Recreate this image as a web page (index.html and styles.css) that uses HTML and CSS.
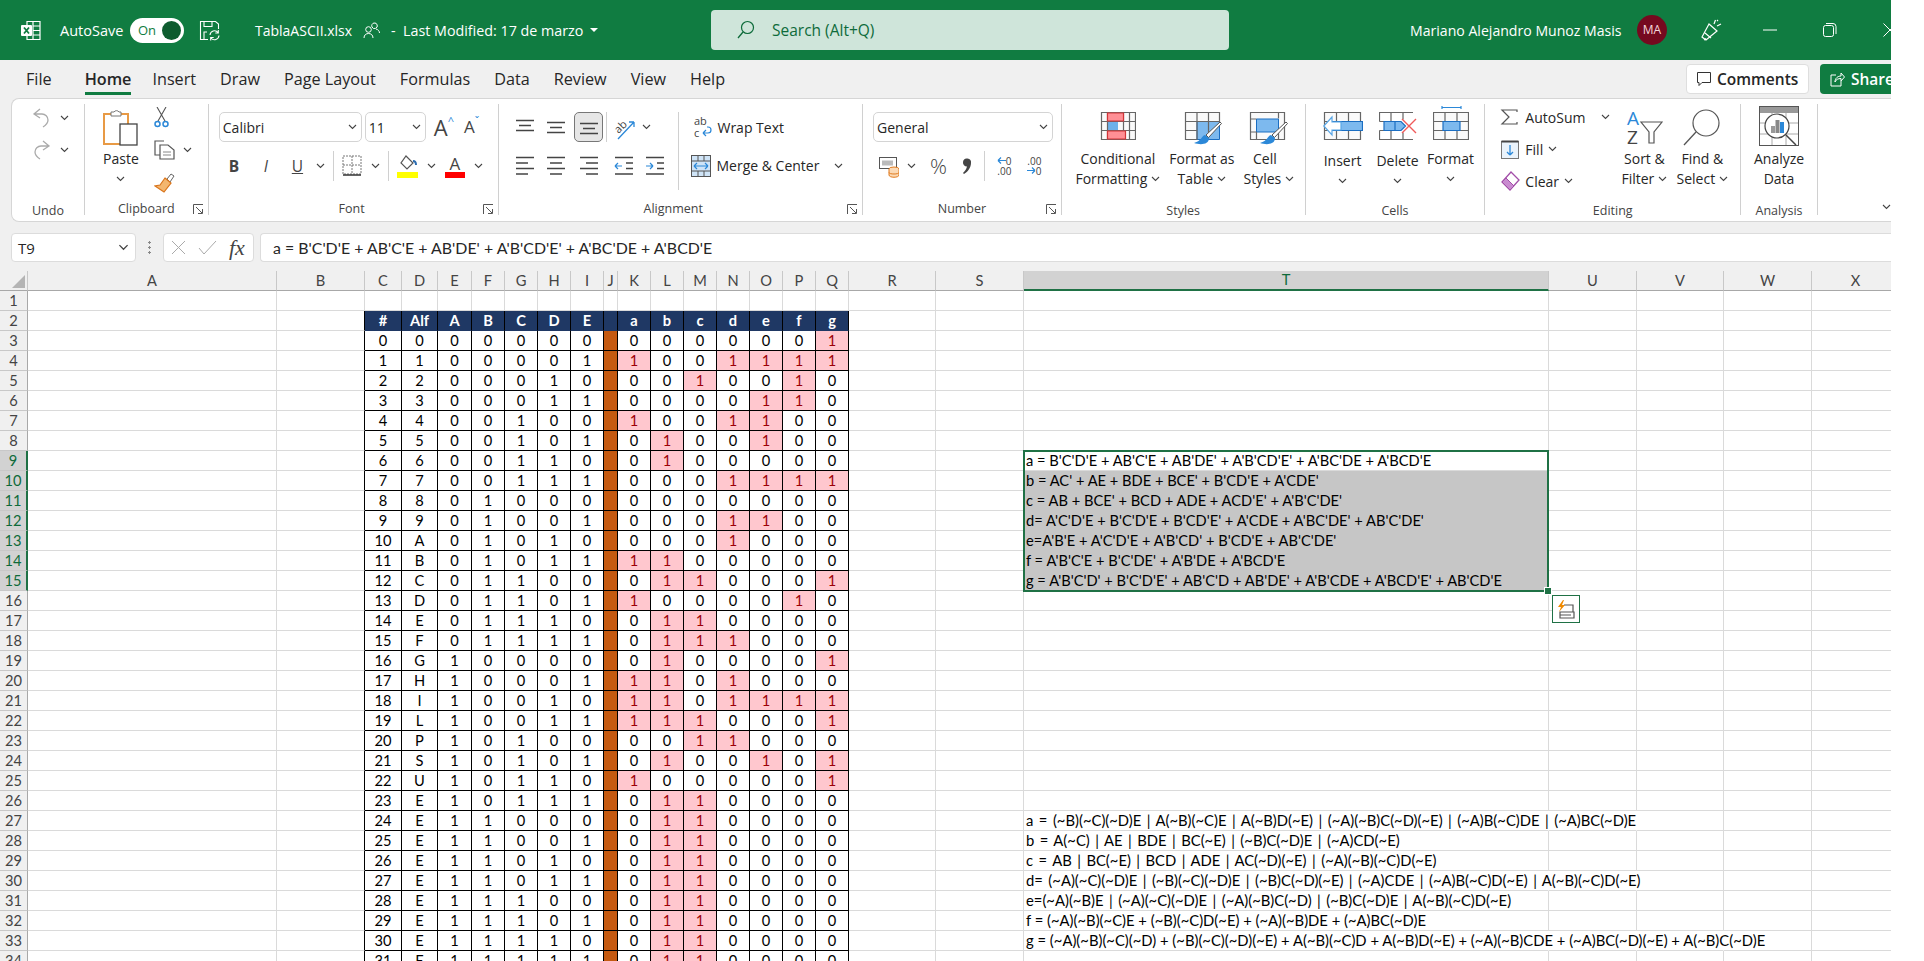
FILE: index.html
```html
<!DOCTYPE html>
<html lang="en">
<head>
    <meta charset="UTF-8">
    <title>TablaASCII.xlsx - Excel</title>
    <link rel="stylesheet" href="styles.css">
</head>
<body>

<svg class="defs" width="0" height="0">
    <symbol id="chev" viewBox="0 0 9 6"><path d="M1 1l3.500 3.500L8 1" fill="none" stroke="#444" stroke-width="1.100"/></symbol>
    <symbol id="launch" viewBox="0 0 11 11"><path d="M.5 10V.5H10M3 3l6 6M5 9.500h4.500V5" fill="none" stroke="#555"/></symbol>
</svg>

<div class="window">

    <div class="titlebar">
        <svg class="t-excel" width="21" height="21" viewBox="0 0 21 21">
            <path d="M7 1.500h13v18H7z" fill="none" stroke="#fff" stroke-width="1.200"/>
            <path d="M13 1.500v18M13 6h7M13 10.500h7M13 15h7" stroke="#fff" stroke-width="1.200"/>
            <rect x="1" y="5" width="11" height="11" rx="1" fill="#fff"/>
            <path d="M4 7.500l5 6M9 7.500l-5 6" stroke="#107c41" stroke-width="1.800"/>
        </svg>
        <span class="t-autosave">AutoSave</span>
        <div class="toggle"><span>On</span><i></i></div>
        <svg class="t-save" width="21" height="21" viewBox="0 0 21 21">
            <path d="M9 19.500H1.500v-18h15L19.500 4v5M5 1.500v5h8v-5M5 19v-7h3" fill="none" stroke="#fff" stroke-width="1.100"/>
            <path d="M11 15a4.500 4.500 0 0 1 8-2.500M20 15.500a4.500 4.500 0 0 1-8 2.500M19.300 10v3h-3M11.700 20.500v-3h3" fill="none" stroke="#fff" stroke-width="1.100"/>
        </svg>
        <span class="t-file">TablaASCII.xlsx</span>
        <svg class="t-person" width="17" height="17" viewBox="0 0 17 17">
            <circle cx="5.500" cy="7.500" r="2.800" fill="none" stroke="#fff"/>
            <path d="M1 16c0-3 2-4.500 4.500-4.500S10 13 10 16M9 5a2.800 2.800 0 1 0 2-4 2.800 2.800 0 0 0-2 4zM13 7c2 .5 3.500 2 3.500 4" fill="none" stroke="#fff"/>
        </svg>
        <span class="t-mod">-&nbsp; Last Modified: 17 de marzo</span>
        <i class="t-caret"></i>
        <div class="search">
            <svg width="18" height="20" viewBox="0 0 18 20">
                <circle cx="10.500" cy="7.500" r="6" fill="none" stroke="#0e6b3a" stroke-width="1.200"/>
                <path d="M6 12l-5 6" stroke="#0e6b3a" stroke-width="1.300"/>
            </svg>
            <span>Search (Alt+Q)</span>
        </div>
        <span class="t-user">Mariano Alejandro Munoz Masis</span>
        <div class="avatar">MA</div>
        <svg class="t-pen" width="22" height="24" viewBox="0 0 22 24">
            <path d="M9 6L2 19l4 3 11-9zM5 15l6 5M6 20.500l-2 1.500" fill="none" stroke="#fff" stroke-width="1.200"/>
            <path d="M14 6l1.500-4M17 8l4-2M17 3l1-1" stroke="#fff" stroke-width="1.200"/>
        </svg>
        <svg class="t-min" width="14" height="2" viewBox="0 0 14 2"><path d="M0 1h14" stroke="#fff"/></svg>
        <svg class="t-max" width="14" height="14" viewBox="0 0 14 14">
            <rect x=".5" y="2.500" width="10" height="11" rx="2" fill="none" stroke="#fff"/>
            <path d="M3 .5h7a3 3 0 0 1 3 3V11" fill="none" stroke="#fff"/>
        </svg>
        <svg class="t-close" width="14" height="14" viewBox="0 0 14 14"><path d="M.5.5l13 13M13.500.5l-13 13" stroke="#fff"/></svg>
    </div>

    <div class="tabsrow">
        <span class="tab t1">File</span>
        <span class="tab t2 active">Home</span>
        <span class="tab t3">Insert</span>
        <span class="tab t3">Draw</span>
        <span class="tab t3">Page Layout</span>
        <span class="tab t3">Formulas</span>
        <span class="tab t3">Data</span>
        <span class="tab t3">Review</span>
        <span class="tab t3">View</span>
        <span class="tab t3">Help</span>
        <div class="comments">
            <svg width="14" height="14" viewBox="0 0 14 14"><path d="M.5.500h13v10H5l-3 3v-3H.5z" fill="none" stroke="#333"/></svg>
            Comments
        </div>
        <div class="share">
            <svg width="15" height="15" viewBox="0 0 15 15"><path d="M6 3H1v11h10V9M5 10c0-4 3-6 6-6V1l3.500 4L11 9V6.500c-3 0-5 1-6 3.500z" fill="none" stroke="#fff"/></svg>
            Share
        </div>
    </div>

    <div class="ribbon">

        <section class="grp g-undo">
            <div class="body">
                <div class="undo-row">
                    <svg width="19" height="20" viewBox="0 0 19 20"><path d="M8 1L2 6l6 4M2 6h8a6 6 0 0 1 6 6c0 3-2 5-5 7" fill="none" stroke="#aaa" stroke-width="1.300"/></svg>
                    <svg class="chev" width="9" height="6"><use href="#chev"/></svg>
                </div>
                <div class="undo-row">
                    <svg width="19" height="20" viewBox="0 0 19 20"><path d="M11 1l6 5-6 4M17 6H9a6 6 0 0 0-6 6c0 3 2 5 5 7" fill="none" stroke="#aaa" stroke-width="1.300"/></svg>
                    <svg class="chev" width="9" height="6"><use href="#chev"/></svg>
                </div>
            </div>
            <div class="label low">Undo</div>
        </section>

        <section class="grp g-clip">
            <div class="body">
                <div class="big w-paste">
                    <div class="big-icon">
                        <svg width="35" height="38" viewBox="0 0 35 38">
                            <rect x="1" y="6" width="24" height="30" fill="#fff" stroke="#e89a45" stroke-width="2"/>
                            <path d="M8 8V4h3a3 3 0 0 1 5 0h2v4z" fill="#fff" stroke="#777"/>
                            <rect x="17" y="16" width="17" height="21" fill="#fff" stroke="#444" stroke-width="1.300"/>
                        </svg>
                    </div>
                    <span class="tx">Paste</span>
                    <svg class="chev" width="9" height="6"><use href="#chev"/></svg>
                </div>
                <div class="clip-col">
                    <svg width="15" height="21" viewBox="0 0 15 21">
                        <path d="M3 0l8 14M12 0L4 14" stroke="#555" stroke-width="1.100"/>
                        <circle cx="3.500" cy="17" r="2.500" fill="none" stroke="#2b88d8" stroke-width="1.500"/>
                        <circle cx="11.500" cy="17" r="2.500" fill="none" stroke="#2b88d8" stroke-width="1.500"/>
                    </svg>
                    <div class="copy-row">
                        <svg width="21" height="20" viewBox="0 0 21 20">
                            <path d="M10 1H1v14h5" fill="none" stroke="#555" stroke-width="1.200"/>
                            <path d="M6 5h8l6 5v9H6z" fill="#fff" stroke="#555" stroke-width="1.200"/>
                            <path d="M9 12h8M9 15h8" stroke="#888"/>
                        </svg>
                        <svg class="chev" width="9" height="6"><use href="#chev"/></svg>
                    </div>
                    <svg width="21" height="21" viewBox="0 0 21 21">
                        <path d="M13 7l4-5 3 2-4 6z" fill="#fff" stroke="#666"/>
                        <path d="M11 6l6 5-7 9-9-6 5-1z" fill="#f3b66f" stroke="#d9741a" stroke-width="1.200"/>
                    </svg>
                </div>
            </div>
            <div class="label">Clipboard</div>
            <svg class="launch" width="11" height="11"><use href="#launch"/></svg>
        </section>

        <section class="grp g-font">
            <div class="body stack">
                <div class="row row-a">
                    <div class="combo c-font"><span>Calibri</span><svg width="9" height="6"><use href="#chev"/></svg></div>
                    <div class="combo c-size"><span>11</span><svg width="9" height="6"><use href="#chev"/></svg></div>
                    <span class="grow">A<sup>^</sup></span>
                    <span class="shrink">A<sup>ˇ</sup></span>
                </div>
                <div class="row row-b f-row">
                    <span class="fb">B</span>
                    <span class="fi">I</span>
                    <span class="fu">U</span>
                    <svg class="chev m-u" width="9" height="6"><use href="#chev"/></svg>
                    <i class="vsep s-u"></i>
                    <svg width="20" height="24" viewBox="0 0 20 24">
                        <path d="M1 2h18v18H1zM10 2v18M1 11h18" fill="none" stroke="#777" stroke-dasharray="2 1"/>
                        <path d="M1 21h18" stroke="#333" stroke-width="1.500"/>
                    </svg>
                    <svg class="chev m-b" width="9" height="6"><use href="#chev"/></svg>
                    <i class="vsep s-b"></i>
                    <svg class="f-fill" width="21" height="24" viewBox="0 0 21 24">
                        <path d="M9 2l7 7-6 6-6-6z" fill="#fff" stroke="#555" stroke-width="1.200"/>
                        <path d="M16 7c2 0 3 1 3 4" fill="none" stroke="#2b6cb0" stroke-width="2"/>
                        <rect x="0" y="18" width="21" height="6" fill="#ffff00"/>
                    </svg>
                    <svg class="chev m-f" width="9" height="6"><use href="#chev"/></svg>
                    <span class="f-color">A<i></i></span>
                    <svg class="chev m-c" width="9" height="6"><use href="#chev"/></svg>
                </div>
            </div>
            <div class="label">Font</div>
            <svg class="launch" width="11" height="11"><use href="#launch"/></svg>
        </section>

        <section class="grp g-align">
            <div class="body">
                <div class="stack al-left">
                    <div class="row row-a">
                        <svg class="al" width="20" height="16" viewBox="0 0 20 16"><path d="M1 1.500h18M4 6.500h12M1 11.500h18" stroke="#444" stroke-width="1.300"/></svg>
                        <svg class="al" width="20" height="16" viewBox="0 0 20 16"><path d="M1 3.500h18M4 8.500h12M1 13.500h18" stroke="#444" stroke-width="1.300"/></svg>
                        <div class="al-on"><svg width="20" height="16" viewBox="0 0 20 16"><path d="M1 4.500h18M4 9.500h12M1 14.500h18" stroke="#444" stroke-width="1.300"/></svg></div>
                        <i class="vsep s-al"></i>
                        <svg class="orient" width="21" height="25" viewBox="0 0 21 25">
                            <path d="M4 24L20 7M20 7v5M20 7h-5" fill="none" stroke="#2b88d8" stroke-width="1.300"/>
                            <text x="0" y="16" class="svg-ab" transform="rotate(-45 6 12)">ab</text>
                        </svg>
                        <svg class="chev m-o" width="9" height="6"><use href="#chev"/></svg>
                    </div>
                    <div class="row row-b">
                        <svg class="al" width="20" height="20" viewBox="0 0 20 20"><path d="M1 1.500h18M1 7h12M1 12.500h18M1 18h12" stroke="#444" stroke-width="1.300"/></svg>
                        <svg class="al" width="20" height="20" viewBox="0 0 20 20"><path d="M1 1.500h18M4 7h12M1 12.500h18M4 18h12" stroke="#444" stroke-width="1.300"/></svg>
                        <svg class="al a-r" width="20" height="20" viewBox="0 0 20 20"><path d="M1 1.500h18M7 7h12M1 12.500h18M7 18h12" stroke="#444" stroke-width="1.300"/></svg>
                        <svg class="al a-o" width="20" height="20" viewBox="0 0 20 20"><path d="M1 1.500h18M12 7h7M12 12.500h7M1 18h18" stroke="#444" stroke-width="1.300"/><path d="M8 10H1M1 10l3-3M1 10l3 3" fill="none" stroke="#2b88d8" stroke-width="1.200"/></svg>
                        <svg class="al a-i" width="20" height="20" viewBox="0 0 20 20"><path d="M1 1.500h18M12 7h7M12 12.500h7M1 18h18" stroke="#444" stroke-width="1.300"/><path d="M1 10h7M8 10L5 7M8 10l-3 3" fill="none" stroke="#2b88d8" stroke-width="1.200"/></svg>
                    </div>
                </div>
                <i class="vsep s-o"></i>
                <div class="stack">
                    <div class="row row-a">
                        <svg class="wrap-ic" width="18" height="24" viewBox="0 0 18 24">
                            <text x="0" y="10" class="svg-ab2">ab</text>
                            <text x="0" y="22" class="svg-ab2">c</text>
                            <path d="M9 18h5a3 3 0 0 0 0-6h-1M9 18l3-3M9 18l3 3" fill="none" stroke="#2b88d8" stroke-width="1.200"/>
                        </svg>
                        <span class="tx-s">Wrap Text</span>
                    </div>
                    <div class="row row-b">
                        <svg class="merge-ic" width="20" height="22" viewBox="0 0 20 22">
                            <rect x=".5" y=".5" width="19" height="21" fill="#cfe4f7" stroke="#555"/>
                            <path d="M.5 6h19M.5 16h19M7 .5V6M13 .5V6M7 16v6M13 16v6" stroke="#555"/>
                            <path d="M3 11h14M3 11l3-3M3 11l3 3M17 11l-3-3M17 11l-3 3" fill="none" stroke="#2b88d8" stroke-width="1.200"/>
                        </svg>
                        <span class="tx-s">Merge &amp; Center</span>
                        <svg class="chev m-m" width="9" height="6"><use href="#chev"/></svg>
                    </div>
                </div>
            </div>
            <div class="label">Alignment</div>
            <svg class="launch" width="11" height="11"><use href="#launch"/></svg>
        </section>

        <section class="grp g-num">
            <div class="body stack">
                <div class="row row-a">
                    <div class="combo c-num"><span>General</span><svg width="9" height="6"><use href="#chev"/></svg></div>
                </div>
                <div class="row row-b n-row">
                    <svg width="20" height="24" viewBox="0 0 20 24">
                        <rect x=".5" y="3.500" width="17" height="11" fill="#fff" stroke="#555"/>
                        <path d="M3 6.500h11v5H3z" fill="#bbb"/>
                        <ellipse cx="15" cy="15" rx="5" ry="2" fill="#fbd9b5" stroke="#e07b1f"/>
                        <path d="M10 15v6c0 3 10 3 10 0v-6M10 18.500c0 2 10 2 10 0" fill="#fbd9b5" stroke="#e07b1f"/>
                    </svg>
                    <svg class="chev m-n" width="9" height="6"><use href="#chev"/></svg>
                    <span class="pct">%</span>
                    <svg class="comma" width="10" height="18" viewBox="0 0 10 18"><path d="M1 5a4 4 0 1 1 8 1c0 4-3 9-7 11l-1-1c2-2 3.500-4 4-6.500A4 4 0 0 1 1 5z" fill="#444"/></svg>
                    <i class="vsep s-n"></i>
                    <div class="dec d-1"><svg width="9" height="9" viewBox="0 0 9 9"><path d="M9 4.500H1M1 4.500l3-3M1 4.500l3 3" fill="none" stroke="#2b88d8" stroke-width="1.200"/></svg><span>0</span><b>.00</b></div>
                    <div class="dec d-2"><b>.00</b><svg width="9" height="9" viewBox="0 0 9 9"><path d="M0 4.500h8M8 4.500l-3-3M8 4.500l-3 3" fill="none" stroke="#2b88d8" stroke-width="1.200"/></svg><span>0</span></div>
                </div>
            </div>
            <div class="label">Number</div>
            <svg class="launch" width="11" height="11"><use href="#launch"/></svg>
        </section>

        <section class="grp g-styles">
            <div class="body">
                <div class="big w-cond">
                    <div class="big-icon">
                        <svg class="i-s" width="37" height="28" viewBox="0 0 37 28">
                            <path d="M2.500.5h34v27h-34z" fill="#fafafa"/>
                            <path d="M8 9.500h11v9H8z" fill="#6fb1ea"/>
                            <path d="M2.500.5h34v27h-34zM2.500 9.500h34M2.500 18.500h34M8.500.5v27M24.500.5v27M30.500.5v27" fill="none" stroke="#666" stroke-width="1.200"/>
                            <path d="M8.500 1h16v8h-16zM8.500 19h18v8h-18z" fill="#ff8f95" stroke="#d13438" stroke-width="1.200"/>
                        </svg>
                    </div>
                    <span class="tx">Conditional</span>
                    <span class="tx">Formatting <svg width="9" height="6"><use href="#chev"/></svg></span>
                </div>
                <div class="big w-fmt">
                    <div class="big-icon">
                        <svg class="i-s" width="40" height="34" viewBox="0 0 40 34">
                            <path d="M3.500.5h34v27h-34z" fill="#fafafa"/>
                            <path d="M15 9.500h22.500v18H15z" fill="#7db9ee" stroke="#1b6ec2"/>
                            <path d="M3.500.5h34v9h-34zM3.500 18.500h12M3.500.5v27h12M15 .5v27M26.500.5v9M26.500 9.500v18" fill="none" stroke="#666" stroke-width="1.200"/>
                            <path d="M38 10L24 23l2.500 2.500L39.500 11.500z" fill="#fff" stroke="#555"/>
                            <path d="M23 23c-4 1-3 6-11 8 6 2 15 2 15-5z" fill="#2b88d8"/>
                        </svg>
                    </div>
                    <span class="tx">Format as</span>
                    <span class="tx">Table <svg width="9" height="6"><use href="#chev"/></svg></span>
                </div>
                <div class="big w-cell">
                    <div class="big-icon">
                        <svg class="i-s" width="40" height="34" viewBox="0 0 40 34">
                            <path d="M1.500.5h34v27h-34z" fill="#fafafa"/>
                            <path d="M7.500 7h22v13h-22z" fill="#7db9ee" stroke="#1b6ec2"/>
                            <path d="M1.500.5h34v27h-34zM29.500.5v6M7.500 20v7.500M1.500 7h6M1.500 20h6M29.500 20v7.500" fill="none" stroke="#666" stroke-width="1.200"/>
                            <path d="M37 10L23 23l2.500 2.500L38.500 11.500z" fill="#fff" stroke="#555"/>
                            <path d="M22 23c-4 1-3 6-11 8 6 2 15 2 15-5z" fill="#2b88d8"/>
                        </svg>
                    </div>
                    <span class="tx cell-line">Cell</span>
                    <span class="tx">Styles <svg width="9" height="6"><use href="#chev"/></svg></span>
                </div>
            </div>
            <div class="label low">Styles</div>
        </section>

        <section class="grp g-cells">
            <div class="body">
                <div class="big w-ins">
                    <div class="big-icon tall">
                        <svg class="i-s" width="40" height="28" viewBox="0 0 40 28">
                            <path d="M1.500.5h36v27h-36z" fill="#fafafa"/>
                            <path d="M1.500.5h36v27h-36zM13.500.5v27M25.500.5v27M1.500 9.500h36M1.500 18.500h36" fill="none" stroke="#666" stroke-width="1.200"/>
                            <path d="M9.500 9.500h30v9h-30z" fill="#7db9ee" stroke="#1b6ec2" stroke-width="1.200"/>
                            <path d="M9 5L.8 14 9 23v-5h9v-8H9z" fill="#fff" stroke="#5aa7e6" stroke-width="1.200"/>
                        </svg>
                    </div>
                    <span class="tx">Insert</span>
                    <svg class="chev" width="9" height="6"><use href="#chev"/></svg>
                </div>
                <div class="big w-del">
                    <div class="big-icon tall">
                        <svg class="i-s" width="38" height="28" viewBox="0 0 38 28">
                            <path d="M.5 9.500V.5H34M.5 18.500v9H34M12 .5v9M24 .5v7M12 18.500v9M24 20.500v7M.5 9.500h5M.5 18.500h5" fill="none" stroke="#666" stroke-width="1.200"/>
                            <path d="M5 9.500h17l4.500 4.500-4.500 4.500H5zM16 9.500v9" fill="#7db9ee" stroke="#1b6ec2" stroke-width="1.200"/>
                            <path d="M23 7l14 14M37 7L23 21" stroke="#f05a5a" stroke-width="1.400"/>
                        </svg>
                    </div>
                    <span class="tx">Delete</span>
                    <svg class="chev" width="9" height="6"><use href="#chev"/></svg>
                </div>
                <div class="big w-for">
                    <div class="big-icon">
                        <svg class="i-s" width="36" height="35" viewBox="0 0 36 35">
                            <path d="M9 1.500h19M9 0v3M28 0v3" stroke="#2b88d8" stroke-width="1.200"/>
                            <path d="M.5 6.500h35v27H.5zM.5 15.500h35M.5 24.500h35M12 6.500v27M24 6.500v27" fill="#fafafa" stroke="#666" stroke-width="1.200"/>
                            <path d="M10 15.500h17v9H10z" fill="#7db9ee" stroke="#1b6ec2" stroke-width="1.200"/>
                        </svg>
                    </div>
                    <span class="tx">Format</span>
                    <svg class="chev" width="9" height="6"><use href="#chev"/></svg>
                </div>
            </div>
            <div class="label low">Cells</div>
        </section>

        <section class="grp g-edit">
            <div class="body">
                <div class="edit-col">
                    <div class="edit-row">
                        <svg width="18" height="16" viewBox="0 0 18 16"><path d="M16 3V1H1l7 7-7 7h15v-2" fill="none" stroke="#555" stroke-width="1.200"/></svg>
                        <span class="tx-s">AutoSum</span>
                        <svg class="chev m-s" width="9" height="6"><use href="#chev"/></svg>
                    </div>
                    <div class="edit-row">
                        <svg width="18" height="19" viewBox="0 0 18 19">
                            <rect x=".5" y="1.500" width="17" height="17" fill="#eaf3fb" stroke="#777"/>
                            <path d="M.5 1.500h17" stroke="#444" stroke-width="2"/>
                            <path d="M9 5v10M9 15l-3-3M9 15l3-3" fill="none" stroke="#2b88d8" stroke-width="1.300"/>
                        </svg>
                        <span class="tx-s">Fill</span>
                        <svg class="chev m-t" width="9" height="6"><use href="#chev"/></svg>
                    </div>
                    <div class="edit-row">
                        <svg width="20" height="20" viewBox="0 0 20 20">
                            <path d="M11 1l8 8-9 10-8-8z" fill="#fff" stroke="#a24ea8" stroke-width="1.300"/>
                            <path d="M6 7l8 8-4 4-8-8z" fill="#c98bd0" stroke="#a24ea8"/>
                        </svg>
                        <span class="tx-s">Clear</span>
                        <svg class="chev m-t" width="9" height="6"><use href="#chev"/></svg>
                    </div>
                </div>
                <div class="big w-sort">
                    <div class="big-icon">
                        <svg class="i-t" width="37" height="36" viewBox="0 0 37 36">
                            <text x="1" y="15" class="svg-az blue">A</text>
                            <text x="1" y="34" class="svg-az">Z</text>
                            <path d="M15 12h21l-8 10v11h-5V22z" fill="#fff" stroke="#555" stroke-width="1.200"/>
                        </svg>
                    </div>
                    <span class="tx">Sort &amp;</span>
                    <span class="tx">Filter <svg width="9" height="6"><use href="#chev"/></svg></span>
                </div>
                <div class="big w-find">
                    <div class="big-icon">
                        <svg class="i-f" width="38" height="38" viewBox="0 0 38 38">
                            <circle cx="23" cy="15" r="13" fill="#fff" stroke="#555" stroke-width="1.200"/>
                            <path d="M13 24L1 37" stroke="#555" stroke-width="1.300"/>
                        </svg>
                    </div>
                    <span class="tx">Find &amp;</span>
                    <span class="tx">Select <svg width="9" height="6"><use href="#chev"/></svg></span>
                </div>
            </div>
            <div class="label low">Editing</div>
        </section>

        <section class="grp g-ana">
            <div class="body">
                <div class="big w-ana">
                    <div class="big-icon">
                        <svg class="i-a" width="40" height="40" viewBox="0 0 40 40">
                            <rect x=".5" y=".5" width="39" height="39" fill="#fff" stroke="#555"/>
                            <rect x="1" y="1" width="38" height="6" fill="#999"/>
                            <path d="M1 17h38M1 28h38M13 7v32M27 7v32" stroke="#aaa"/>
                            <circle cx="18" cy="20" r="12" fill="#fff" stroke="#444" stroke-width="1.200"/>
                            <rect x="12" y="20" width="4" height="7" fill="#999"/>
                            <rect x="16.500" y="14" width="4" height="13" fill="#888"/>
                            <rect x="21" y="16" width="4" height="11" fill="#2b88d8"/>
                            <path d="M27 29l10 10" stroke="#444" stroke-width="1.500"/>
                        </svg>
                    </div>
                    <span class="tx">Analyze</span>
                    <span class="tx">Data</span>
                </div>
            </div>
            <div class="label low">Analysis</div>
        </section>

        <svg class="collapse" width="9" height="6"><use href="#chev"/></svg>
    </div>

    <div class="formulabar">
        <div class="namebox"><span>T9</span><svg width="11" height="7" viewBox="0 0 9 6"><use href="#chev"/></svg></div>
        <div class="dots"></div>
        <div class="fxbox">
            <svg width="15" height="15" viewBox="0 0 15 15"><path d="M1 1l13 13M14 1L1 14" stroke="#aaa"/></svg>
            <svg width="19" height="15" viewBox="0 0 19 15"><path d="M1 8l5 6L18 1" fill="none" stroke="#aaa"/></svg>
            <span>fx</span>
        </div>
        <div class="fxinput">a = B'C'D'E + AB'C'E + AB'DE' + A'B'CD'E' + A'BC'DE + A'BCD'E</div>
    </div>

    <div class="sheet">
        <table class="grid">
            <colgroup id="cols"></colgroup>
            <thead><tr id="head"></tr></thead>
            <tbody id="rows"></tbody>
        </table>
        <div class="sel"><i></i></div>
        <div class="quick">
            <svg width="19" height="19" viewBox="0 0 19 19">
                <path d="M3 12h14v6H3zM7 5h9v7M3 15h11" fill="none" stroke="#555" stroke-width="1.200"/>
                <path d="M6 0L1 7h3l-2 5 6-7H5l2-5z" fill="#f08a00"/>
            </svg>
        </div>
    </div>
</div>

<script src="script.js"></script>
</body>
</html>
```

FILE: styles.css
```css
body {
    margin: 0;
    background-color: #fff;
    font-family: "Open Sans", sans-serif;
    color: #262626;
    overflow: hidden;
}
svg {
    display: block;
    flex: none;
}
.defs {
    position: absolute;
}
.window {
    width: 1891px;
    height: 961px;
    background-color: #f0f0f0;
    overflow: hidden;
}

/* title bar */
.titlebar {
    display: flex;
    align-items: center;
    height: 60px;
    padding-left: 20px;
    background-color: #107c41;
    color: #fff;
    font-size: 14px;
    white-space: nowrap;
}
.titlebar > * {
    flex: none;
}
.t-autosave {
    margin-left: 19px;
    width: 70px;
    font-size: 14.500px;
}
.toggle {
    display: flex;
    align-items: center;
    justify-content: space-between;
    width: 54px;
    height: 25px;
    padding: 0 1px 0 8px;
    box-sizing: border-box;
    background-color: #fff;
    border-radius: 13px;
    color: #107c41;
    font-size: 13px;
}
.toggle i {
    width: 19px;
    height: 19px;
    margin-right: 2px;
    border-radius: 50%;
    background-color: #0e5c2f;
}
.t-save {
    margin-left: 15px;
}
.t-file {
    margin-left: 35px;
    width: 108px;
}
.t-mod {
    margin-left: 11px;
    width: 199px;
    font-size: 14.300px;
}
.t-caret {
    width: 0;
    height: 0;
    border-left: 4px solid transparent;
    border-right: 4px solid transparent;
    border-top: 4px solid #fff;
}
.search {
    display: flex;
    align-items: center;
    gap: 17px;
    width: 518px;
    height: 40px;
    margin-left: 113px;
    padding-left: 26px;
    box-sizing: border-box;
    background-color: #cfe5da;
    border-radius: 4px;
    color: #0e6b3a;
    font-size: 15.500px;
}
.t-user {
    margin-left: 181px;
    width: 227px;
    font-size: 14.100px;
}
.avatar {
    width: 30px;
    height: 30px;
    line-height: 30px;
    border-radius: 50%;
    background-color: #75091f;
    text-align: center;
    font-size: 12px;
    color: #f3d6da;
}
.t-pen {
    margin-left: 33px;
}
.t-min {
    margin-left: 41px;
}
.t-max {
    margin-left: 46px;
}
.t-close {
    margin-left: 46px;
}

/* tabs */
.tabsrow {
    display: flex;
    align-items: center;
    height: 38px;
    font-size: 16.200px;
    white-space: nowrap;
}
.tab {
    position: relative;
    line-height: 38px;
}
.t1 {
    margin-left: 26px;
}
.t2 {
    margin-left: 33px;
}
.t3 {
    margin-left: 24px;
}
.t2 + .t3 {
    margin-left: 21px;
}
.tab.active {
    font-weight: 600;
}
.tab.active::after {
    content: "";
    position: absolute;
    left: 0;
    right: 0;
    bottom: 3px;
    height: 3px;
    background-color: #107c41;
}
.comments,
.share {
    display: flex;
    align-items: center;
    gap: 6px;
    height: 30px;
    padding-left: 10px;
    box-sizing: border-box;
    border-radius: 4px;
    font-weight: 600;
    font-size: 15.500px;
}
.comments {
    width: 123px;
    margin-left: auto;
    background-color: #fff;
    border: 1px solid #dedede;
}
.share {
    width: 71px;
    margin-left: 11px;
    background-color: #107c41;
    color: #fff;
    border-radius: 4px 0 0 4px;
    overflow: hidden;
}

/* ribbon */
.ribbon {
    display: flex;
    height: 111px;
    margin-left: 11px;
    padding: 5px 0 6px;
    background-color: #fff;
    border-top: 1px solid #d6d6d6;
    border-bottom: 1px solid #d6d6d6;
    border-left: 1px solid #d6d6d6;
    border-radius: 8px 0 0 8px;
    font-size: 14px;
    white-space: nowrap;
}
.grp {
    position: relative;
    display: flex;
    flex-direction: column;
    box-sizing: border-box;
    border-right: 1px solid #d0d0d0;
}
.body {
    flex: 1;
    display: flex;
    min-height: 0;
}
.label {
    height: 14px;
    line-height: 14px;
    margin-bottom: -1px;
    text-align: center;
    font-size: 12.500px;
    color: #444;
}
.label.low {
    margin-bottom: -3px;
}
.launch {
    position: absolute;
    right: 4px;
    bottom: 0;
}
.g-undo { width: 73px; }
.g-clip { width: 124px; }
.g-font { width: 291px; }
.g-align { width: 364px; }
.g-num { width: 199px; }
.g-styles { width: 244px; }
.g-cells { width: 180px; }
.g-edit { width: 256px; }
.g-ana { width: 77px; }
.g-font .label { padding-right: 4px; }
.g-align .label { padding-right: 15px; }

.g-undo .body {
    flex-direction: column;
    gap: 12px;
    padding: 4px 0 0 20px;
}
.undo-row {
    display: flex;
    align-items: center;
    gap: 9px;
}
.big {
    display: flex;
    flex-direction: column;
    align-items: center;
}
.big-icon {
    display: flex;
    align-items: flex-end;
    height: 45px;
    flex: none;
}
.big-icon.tall {
    height: 47px;
}
.big-icon .i-s {
    align-self: flex-start;
    margin-top: 8px;
}
.big .tx {
    display: flex;
    align-items: center;
    gap: 4px;
    line-height: 20px;
}
.big .cell-line {
    margin-right: 8px;
}
.big > .chev {
    margin-top: 7px;
}
.g-clip .body {
    padding-left: 12px;
}
.w-paste {
    width: 48px;
}
.w-paste .big-icon {
    align-items: flex-start;
    padding-top: 4px;
    box-sizing: border-box;
}
.clip-col {
    display: flex;
    flex-direction: column;
    gap: 12px;
    padding: 3px 0 0 9px;
}
.copy-row {
    display: flex;
    align-items: center;
    gap: 8px;
}

.stack {
    display: flex;
    flex-direction: column;
    padding-top: 8px;
}
.row {
    display: flex;
    align-items: center;
    flex: none;
}
.row-a {
    height: 30px;
}
.row-b {
    height: 25px;
    margin-top: 11px;
}
.g-font .row,
.g-num .row {
    padding-left: 10px;
}
.combo {
    display: flex;
    align-items: center;
    justify-content: space-between;
    height: 30px;
    padding: 0 4px 0 3px;
    box-sizing: border-box;
    background-color: #fff;
    border: 1px solid #d4d4d4;
    border-radius: 5px;
    font-size: 14px;
}
.c-font { width: 143px; }
.c-size { width: 61px; margin-left: 3px; }
.c-num { width: 180px; }
.grow,
.shrink {
    display: flex;
    align-items: flex-start;
    color: #444;
    line-height: 24px;
}
.grow {
    margin-left: 8px;
    font-size: 22px;
}
.shrink {
    margin-left: 10px;
    font-size: 17px;
}
sup {
    color: #2b88d8;
    font-size: 11px;
    line-height: 12px;
    vertical-align: baseline;
}
.g-font .f-row {
    padding-left: 20px;
}
.f-row .fb,
.f-row .fi,
.f-row .fu {
    font-size: 15.500px;
    width: 10px;
    text-align: center;
    color: #444;
}
.fb {
    font-weight: 700;
}
.fi {
    margin-left: 22px;
    font-style: italic;
}
.fu {
    margin-left: 21px;
    text-decoration: underline;
}
.m-u { margin-left: 14px; }
.vsep {
    width: 1px;
    height: 30px;
    background-color: #d0d0d0;
    flex: none;
}
.s-u { margin: 0 8px 0 8px; }
.m-b { margin-left: 9px; }
.s-b { margin: 0 8px 0 8px; }
.m-f { margin-left: 9px; }
.f-color {
    position: relative;
    width: 20px;
    margin-left: 9px;
    height: 24px;
    line-height: 20px;
    text-align: center;
    font-size: 17px;
    color: #444;
}
.f-color i {
    position: absolute;
    left: 0;
    right: 0;
    bottom: 0;
    height: 6px;
    background-color: #f00;
}
.m-c { margin-left: 9px; }

.g-align .body {
    padding-left: 16px;
}
.al-left {
    width: 163px;
}
.al-on {
    display: flex;
    align-items: center;
    justify-content: center;
    width: 29px;
    height: 30px;
    box-sizing: border-box;
    margin-left: 8px;
    background-color: #e6e6e6;
    border: 1px solid #777;
    border-radius: 5px;
}
.al + .al {
    margin-left: 11px;
}
.a-r.al { margin-left: 13px; }
.a-o.al { margin-left: 15px; }
.a-i.al { margin-left: 11px; }
.s-al { margin-left: 3px; }
.orient { margin-left: 7px; }
.m-o { margin-left: 7px; }
.s-o { margin-top: 8px; height: 78px; }
.wrap-ic { margin-left: 15px; }
.tx-s { margin-left: 5px; }
.merge-ic { margin-left: 12px; }
.m-m { margin-left: 15px; }
.svg-ab,
.svg-ab2 {
    font-size: 11px;
    fill: #444;
}
.svg-az {
    font-size: 19px;
    fill: #444;
}
.svg-az.blue {
    fill: #2b88d8;
}

.g-num .n-row { padding-left: 16px; }
.m-n { margin-left: 8px; }
.pct {
    margin-left: 14px;
    font-size: 21px;
    font-weight: 300;
    color: #444;
}
.comma { margin-left: 15px; }
.s-n { margin-left: 12px; }
.dec {
    display: grid;
    grid-template-columns: auto auto;
    align-items: center;
    justify-content: center;
    width: 20px;
    font-size: 10px;
    line-height: 10px;
    color: #444;
}
.dec b {
    font-weight: 400;
    grid-column: 1 / 3;
    text-align: right;
}
.d-1 { margin-left: 9px; }
.d-2 { margin-left: 10px; }

.g-styles .body { padding-left: 10px; }
.w-cond { width: 92px; }
.w-fmt { width: 76px; }
.w-cell { width: 58px; }
.g-cells .body { padding-left: 10px; }
.w-ins { width: 54px; }
.w-del { width: 56px; }
.w-for { width: 50px; }
.w-for .big-icon .i-s { margin-top: 2px; }

.g-edit .body { padding-left: 15px; }
.edit-col {
    display: flex;
    flex-direction: column;
    flex: none;
    gap: 10px;
    width: 105px;
    padding-top: 2px;
}
.edit-row {
    display: flex;
    align-items: center;
    height: 22px;
}
.edit-row > svg:first-child {
    width: 20px;
}
.m-s { margin-left: 16px; }
.m-t { margin-left: 5px; }
.w-sort { width: 78px; }
.w-find { width: 38px; }
.big-icon .i-t { align-self: flex-start; margin-top: 6px; }
.big-icon .i-f { align-self: flex-start; margin-top: 4px; }
.g-ana .body { justify-content: center; }
.big-icon .i-a { align-self: flex-start; margin-top: 2px; }
.collapse {
    margin: 100px 0 0 64px;
}

/* formula bar */
.formulabar {
    display: flex;
    margin: 11px 0 0 11px;
    height: 29px;
}
.namebox,
.fxbox,
.fxinput {
    box-sizing: border-box;
    height: 29px;
    background-color: #fff;
    border: 1px solid #dcdcdc;
    border-radius: 4px;
    font-size: 14px;
}
.namebox {
    display: flex;
    align-items: center;
    justify-content: space-between;
    width: 125px;
    padding: 0 6px;
    font-size: 15px;
}
.dots {
    width: 3px;
    height: 15px;
    margin: 7px 12px;
    background-image: radial-gradient(circle, #888 1.300px, transparent 1.400px);
    background-size: 3px 5px;
}
.fxbox {
    display: flex;
    align-items: center;
    gap: 12px;
    width: 91px;
    padding-left: 7px;
}
.fxbox span {
    font-family: "Liberation Serif", serif;
    font-style: italic;
    font-size: 22px;
    color: #444;
}
.fxinput {
    flex: 1;
    margin-left: 6px;
    padding-left: 12px;
    line-height: 27px;
    border-right: 0;
    border-radius: 4px 0 0 4px;
    white-space: nowrap;
    font-family: Lato, sans-serif;
    font-size: 15.900px;
}

/* sheet */
.sheet {
    position: relative;
    margin-top: 9px;
}
.grid {
    table-layout: fixed;
    width: 1900px;
    border-spacing: 0;
    background-color: #fff;
    font-family: Lato, sans-serif;
    font-size: 14.670px;
    color: #000;
}
.grid th,
.grid td {
    height: 19px;
    padding: 0;
    line-height: 19px;
    font-weight: 400;
    text-align: center;
    white-space: nowrap;
    border-right: 1px solid #dadada;
    border-bottom: 1px solid #dadada;
}
.grid thead th {
    background-color: #f0f0f0;
    border-right-color: #c8c8c8;
    border-bottom-color: #a8a8a8;
    color: #444;
}
.grid thead th.corner {
    position: relative;
    background-color: #f0f0f0;
}
.corner::after {
    content: "";
    position: absolute;
    right: 2px;
    bottom: 2px;
    border-left: 13px solid transparent;
    border-bottom: 13px solid #b4b4b4;
}
.grid thead th.col-on {
    background-color: #d2d2d2;
    color: #0e6b3a;
    border-bottom: 2px solid #1f7145;
    height: 18px;
    line-height: 18px;
}
.grid tbody th {
    background-color: #f0f0f0;
    border-right-color: #a8a8a8;
    border-bottom-color: #c8c8c8;
    color: #444;
}
.grid tbody th.row-on {
    background-color: #d2d2d2;
    color: #0e6b3a;
    border-right: 2px solid #1f7145;
}
.grid td.data {
    border-right-color: #000;
    border-bottom-color: #000;
}
.grid td.edge {
    border-right-color: #000;
}
.grid td.hd {
    background-color: #1f3864;
    color: #fff;
    font-weight: 700;
    border-bottom-color: #1f3864;
}
.grid td.gap {
    background-color: #c55a11;
}
.grid td.hot {
    background-color: #ffc7ce;
    color: #9c0006;
}
.grid td.txt {
    padding-left: 2px;
    text-align: left;
    overflow: visible;
}
.grid td.sm {
    font-size: 14.800px;
}
.grid td.pipe {
    word-spacing: 1.700px;
}
.grid td.mark {
    background-color: #c6c6c6;
    border-color: #c6c6c6;
}
.grid td.open {
    border-right-color: transparent;
}
.sel {
    position: absolute;
    left: 1023px;
    top: 179px;
    width: 522px;
    height: 138px;
    border: 2px solid #1f7145;
}
.sel i {
    position: absolute;
    right: -5px;
    bottom: -5px;
    width: 6px;
    height: 6px;
    background-color: #1f7145;
    border: 1px solid #fff;
}
.quick {
    position: absolute;
    left: 1552px;
    top: 324px;
    display: flex;
    align-items: center;
    justify-content: center;
    width: 26px;
    height: 26px;
    background-color: #fff;
    border: 1px solid #1f7145;
}
```

FILE: script.js
```js
const colWidths = [28, 249, 88, 37, 36, 34, 33, 33, 33, 33, 14, 33, 33, 33, 33, 33, 33, 33, 87, 88, 525, 88, 87, 88, 88];
const colNames = 'ABCDEFGHIJKLMNOPQRSTUVWX'.split('');
const tableHead = ['#', 'Alf', 'A', 'B', 'C', 'D', 'E', '', 'a', 'b', 'c', 'd', 'e', 'f', 'g'];

// index, letter, inputs, segments
const tableRows = `
0 0 00000 0000001
1 1 00001 1001111
2 2 00010 0010010
3 3 00011 0000110
4 4 00100 1001100
5 5 00101 0100100
6 6 00110 0100000
7 7 00111 0001111
8 8 01000 0000000
9 9 01001 0001100
10 A 01010 0001000
11 B 01011 1100000
12 C 01100 0110001
13 D 01101 1000010
14 E 01110 0110000
15 F 01111 0111000
16 G 10000 0100001
17 H 10001 1101000
18 I 10010 1101111
19 L 10011 1110001
20 P 10100 0011000
21 S 10101 0100101
22 U 10110 1000001
23 E 10111 0110000
24 E 11000 0110000
25 E 11001 0110000
26 E 11010 0110000
27 E 11011 0110000
28 E 11100 0110000
29 E 11101 0110000
30 E 11110 0110000
31 E 11111 0110000
`.trim().split('\n').map(line => line.split(' '));

const notes = {
    9: "a = B'C'D'E + AB'C'E + AB'DE' + A'B'CD'E' + A'BC'DE + A'BCD'E",
    10: "b = AC' + AE + BDE + BCE' + B'CD'E + A'CDE'",
    11: "c = AB + BCE' + BCD + ADE + ACD'E' + A'B'C'DE'",
    12: "d= A'C'D'E + B'C'D'E + B'CD'E' + A'CDE + A'BC'DE' + AB'C'DE'",
    13: "e=A'B'E + A'C'D'E + A'B'CD' + B'CD'E + AB'C'DE'",
    14: "f = A'B'C'E + B'C'DE' + A'B'DE + A'BCD'E",
    15: "g = A'B'C'D' + B'C'D'E' + AB'C'D + AB'DE' + A'B'CDE + A'BCD'E' + AB'CD'E",
    27: "a = (~B)(~C)(~D)E | A(~B)(~C)E | A(~B)D(~E) | (~A)(~B)C(~D)(~E) | (~A)B(~C)DE | (~A)BC(~D)E",
    28: "b = A(~C) | AE | BDE | BC(~E) | (~B)C(~D)E | (~A)CD(~E)",
    29: "c = AB | BC(~E) | BCD | ADE | AC(~D)(~E) | (~A)(~B)(~C)D(~E)",
    30: "d= (~A)(~C)(~D)E | (~B)(~C)(~D)E | (~B)C(~D)(~E) | (~A)CDE | (~A)B(~C)D(~E) | A(~B)(~C)D(~E)",
    31: "e=(~A)(~B)E | (~A)(~C)(~D)E | (~A)(~B)C(~D) | (~B)C(~D)E | A(~B)(~C)D(~E)",
    32: "f = (~A)(~B)(~C)E + (~B)(~C)D(~E) + (~A)(~B)DE + (~A)BC(~D)E",
    33: "g = (~A)(~B)(~C)(~D) + (~B)(~C)(~D)(~E) + A(~B)(~C)D + A(~B)D(~E) + (~A)(~B)CDE + (~A)BC(~D)(~E) + A(~B)C(~D)E"
};

// long notes run over the next columns, so those grid lines are hidden
const overflowCols = { 27: 'TU', 30: 'TU', 33: 'TUV' };

function addCell(row, text, className) {
    const td = document.createElement('td');
    td.textContent = text;
    if (className) td.className = className;
    row.appendChild(td);
    return td;
}

function buildColumns() {
    const cols = document.getElementById('cols');
    colWidths.forEach(width => {
        const col = document.createElement('col');
        col.style.width = width + 'px';
        cols.appendChild(col);
    });

    const head = document.getElementById('head');
    const corner = document.createElement('th');
    corner.className = 'corner';
    head.appendChild(corner);
    colNames.forEach(name => {
        const th = document.createElement('th');
        th.textContent = name;
        if (name === 'T') th.className = 'col-on';
        head.appendChild(th);
    });
}

function tableCells(rowNum) {
    if (rowNum === 2) {
        return tableHead.map(text => ({ text: text, cls: 'data hd' }));
    }
    const rowData = tableRows[rowNum - 3];
    if (!rowData) return [];
    const [num, letter, inputs, segments] = rowData;
    const cells = [{ text: num, cls: 'data' }, { text: letter, cls: 'data' }];
    inputs.split('').forEach(bit => cells.push({ text: bit, cls: 'data' }));
    cells.push({ text: '', cls: 'data gap' });
    segments.split('').forEach(bit => {
        cells.push({ text: bit, cls: bit === '1' ? 'data hot' : 'data' });
    });
    return cells;
}

function buildRows() {
    const tbody = document.getElementById('rows');
    for (let r = 1; r <= 34; r++) {
        const tr = document.createElement('tr');
        const th = document.createElement('th');
        th.textContent = r;
        if (r >= 9 && r <= 15) th.className = 'row-on';
        tr.appendChild(th);

        const cells = tableCells(r);
        colNames.forEach((name, i) => {
            if (i >= 2 && i < 17) {
                addCell(tr, cells[i - 2] ? cells[i - 2].text : '', cells[i - 2] ? cells[i - 2].cls : '');
            } else if (name === 'T' && notes[r]) {
                let cls = 'txt';
                if (r > 20) cls += ' sm';
                if (r >= 27 && r <= 31) cls += ' pipe';
                if (r >= 10 && r <= 15) cls += ' mark';
                if (overflowCols[r]) cls += ' open';
                addCell(tr, notes[r], cls);
            } else {
                let cls = '';
                if (name === 'B' && cells.length) cls = 'edge';
                if (overflowCols[r] && overflowCols[r].includes(name)) cls = 'open';
                addCell(tr, '', cls);
            }
        });
        tbody.appendChild(tr);
    }
}

buildColumns();
buildRows();
```
